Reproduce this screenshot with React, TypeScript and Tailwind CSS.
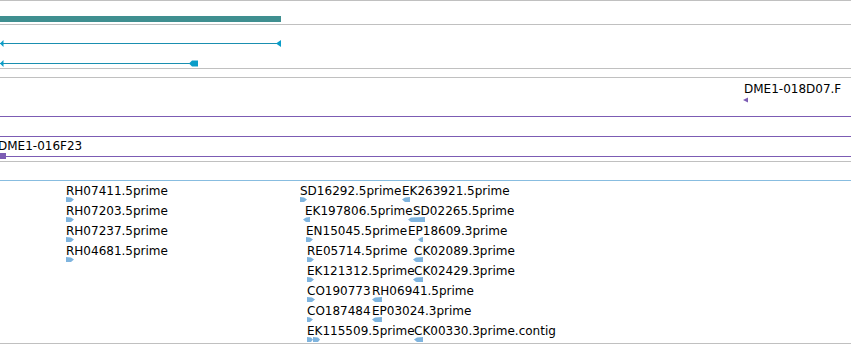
type Dir = 'r' | 'l' | 'rr';

interface Feature {
  label: string;
  x: number;
  ax: number;
  aw: number;
  dir: Dir;
}

const rows: Feature[][] = [
  [
    { label: 'RH07411.5prime', x: 66, ax: 66, aw: 8, dir: 'r' },
    { label: 'SD16292.5prime', x: 300, ax: 300, aw: 7, dir: 'r' },
    { label: 'EK263921.5prime', x: 402, ax: 402, aw: 8, dir: 'l' },
  ],
  [
    { label: 'RH07203.5prime', x: 66, ax: 66, aw: 8, dir: 'r' },
    { label: 'EK197806.5prime', x: 305, ax: 303, aw: 7, dir: 'l' },
    { label: 'SD02265.5prime', x: 413, ax: 408, aw: 17, dir: 'l' },
  ],
  [
    { label: 'RH07237.5prime', x: 66, ax: 66, aw: 8, dir: 'r' },
    { label: 'EN15045.5prime', x: 306, ax: 306, aw: 7, dir: 'r' },
    { label: 'EP18609.3prime', x: 408, ax: 418, aw: 5, dir: 'l' },
  ],
  [
    { label: 'RH04681.5prime', x: 66, ax: 66, aw: 8, dir: 'r' },
    { label: 'RE05714.5prime', x: 307, ax: 307, aw: 7, dir: 'r' },
    { label: 'CK02089.3prime', x: 414, ax: 413, aw: 10, dir: 'l' },
  ],
  [
    { label: 'EK121312.5prime', x: 307, ax: 307, aw: 7, dir: 'r' },
    { label: 'CK02429.3prime', x: 414, ax: 413, aw: 10, dir: 'l' },
  ],
  [
    { label: 'CO190773', x: 307, ax: 307, aw: 8, dir: 'r' },
    { label: 'RH06941.5prime', x: 372, ax: 372, aw: 10, dir: 'l' },
  ],
  [
    { label: 'CO187484', x: 307, ax: 307, aw: 6, dir: 'r' },
    { label: 'EP03024.3prime', x: 372, ax: 372, aw: 10, dir: 'l' },
  ],
  [
    { label: 'EK115509.5prime', x: 307, ax: 307, aw: 13, dir: 'rr' },
    { label: 'CK00330.3prime.contig', x: 414, ax: 414, aw: 9, dir: 'l' },
  ],
];

function Glyph({ w, dir }: { w: number; dir: Dir }) {
  const fill = '#7fb4de';
  if (dir === 'rr') {
    const h = Math.floor(w / 2);
    return (
      <svg width={w} height={5} className="block">
        <polygon points={`0,0 ${h - 2},0.5 ${h},2.5 ${h - 2},5 0,5`} fill={fill} />
        <polygon points={`${h},0 ${w - 2},0.5 ${w},2.5 ${w - 2},5 ${h},5`} fill={fill} />
      </svg>
    );
  }
  const pts = dir === 'r'
    ? `0,0 ${w - 3},0.5 ${w},2.5 ${w - 3},5 0,5`
    : `3,0.5 ${w},0 ${w},5 3,5 0,2.5`;
  return (
    <svg width={w} height={5} className="block">
      <polygon points={pts} fill={fill} />
    </svg>
  );
}

const Rule = ({ c = 'bg-[#c0c0c0]' }: { c?: string }) => <div className={`h-px ${c}`} />;

export default function App() {
  return (
    <div className="w-[851px] h-[345px] bg-white overflow-hidden text-black text-[12px] font-['DejaVu_Sans',sans-serif]">
      <Rule />
      {/* gene span */}
      <div className="h-[23px] pt-[15px]">
        <div className="h-[6px] w-[281px] bg-[#3f8f90]" />
      </div>
      <Rule />
      {/* transcripts */}
      <div className="h-[43px]">
        <svg width={851} height={43} className="block">
          <rect x={0} y={18} width={281} height={1} fill="#1a8fb0" />
          <polygon points="0,18.5 3.5,15 3.5,22" fill="#0a9dc8" />
          <polygon points="276,18.5 281,15 281,22" fill="#0a9dc8" />
          <rect x={0} y={38} width={196} height={1} fill="#1a8fb0" />
          <polygon points="0,38.5 3.5,35 3.5,42" fill="#0a9dc8" />
          <polygon points="189,38.5 192,35.5 198,35.5 198,41.5 192,41.5" fill="#0a9dc8" />
        </svg>
      </div>
      <Rule />
      <div className="h-[8px]" />
      <Rule />
      {/* clone ends */}
      <div className="flex flex-col">
        <div className="h-[38px] pl-[744px] pt-[4px] flex flex-col leading-[14px]">
          <span className="whitespace-nowrap">DME1-018D07.F</span>
          <svg width={6} height={6} className="block mt-px -ml-px">
            <polygon points="0,3 5,0.5 5,5.5" fill="#7c5cb4" />
          </svg>
        </div>
        <div className="h-px bg-[#7c5cb4]" />
        <div className="h-[19px]" />
        <div className="h-px bg-[#7c5cb4]" />
        <div className="h-[19px] pt-[2px] -ml-[2px] leading-[14px] whitespace-nowrap">DME1-016F23</div>
        <div className="relative h-px bg-[#7c5cb4]">
          <div className="absolute left-0 -top-[3px] h-[6px] w-[6px] bg-[#7c5cb4]" />
        </div>
        <div className="h-[4px]" />
      </div>
      <Rule />
      <div className="h-[18px]" />
      <Rule c="bg-[#88bde0]" />
      {/* ESTs */}
      <div className="h-[162px] pt-[3px] flex flex-col">
        {rows.map((row, i) => (
          <div key={i} className="relative h-[20px] shrink-0">
            {row.map(f => (
              <div key={f.label}>
                <div className="absolute top-0 leading-[14px] whitespace-nowrap" style={{ left: f.x }}>
                  {f.label}
                </div>
                <div className="absolute top-[13px]" style={{ left: f.ax }}>
                  <Glyph w={f.aw} dir={f.dir} />
                </div>
              </div>
            ))}
          </div>
        ))}
      </div>
      <Rule />
    </div>
  );
}
